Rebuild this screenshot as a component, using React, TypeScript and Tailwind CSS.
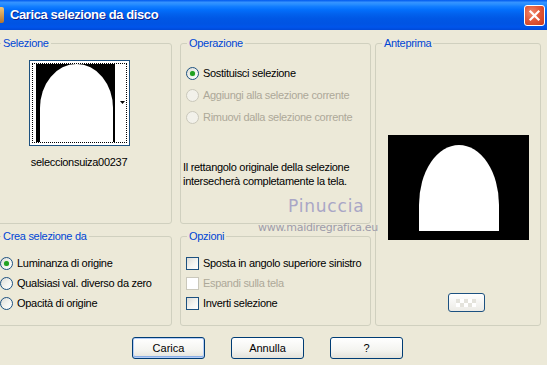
import React from "react";

const FONT = { fontFamily: '"Liberation Sans", Arial, sans-serif' };

function Radio({ checked, disabled }: { checked?: boolean; disabled?: boolean }) {
  return (
    <span
      className={
        disabled
          ? "inline-flex w-[13px] h-[13px] shrink-0 rounded-full border border-[#CAC8BB] bg-[#F2F1EA] items-center justify-center"
          : "inline-flex w-[13px] h-[13px] shrink-0 rounded-full border border-[#1C5180] bg-[linear-gradient(135deg,#DCDCD7_0%,#F4F4F0_55%,#FFFFFF_100%)] items-center justify-center"
      }
    >
      {checked && <span className="w-[5px] h-[5px] rounded-full bg-[#21A121] shadow-[0_0_1px_#6DD36D]" />}
    </span>
  );
}

function Check({ disabled }: { disabled?: boolean }) {
  return (
    <span
      className={
        disabled
          ? "inline-block w-[13px] h-[13px] shrink-0 border border-[#CAC8BB] bg-white"
          : "inline-block w-[13px] h-[13px] shrink-0 border border-[#1C5180] bg-[linear-gradient(135deg,#DCDCD7_0%,#F4F4F0_55%,#FFFFFF_100%)]"
      }
    />
  );
}

function Group({
  title,
  className,
  children,
}: {
  title: string;
  className?: string;
  children?: React.ReactNode;
}) {
  return (
    <fieldset className={"border border-[#D0D0BF] rounded-[3px] min-w-0 " + (className ?? "")}>
      <legend className="ml-[6px] px-[2px] text-[#0046D5] leading-[13px]">{title}</legend>
      {children}
    </fieldset>
  );
}

function XPButton({ label, def }: { label: string; def?: boolean }) {
  return (
    <button
      className={
        def
          ? "w-[73px] h-[22px] rounded-[3px] border border-[#003C74] bg-[linear-gradient(to_bottom,#FFFFFF_0%,#F4F4F0_60%,#E3E2DA_100%)] shadow-[inset_0_0_0_1px_#B4CDF7,inset_0_-1px_0_1px_#89ADE4] text-black text-[11px] leading-none"
          : "w-[73px] h-[22px] rounded-[3px] border border-[#003C74] bg-[linear-gradient(to_bottom,#FFFFFF_0%,#F4F4F0_60%,#E3E2DA_100%)] text-black text-[11px] leading-none"
      }
    >
      {label}
    </button>
  );
}

export default function App() {
  return (
    <div
      className="relative w-[547px] h-[365px] overflow-hidden bg-[#ECE9D8] flex flex-col text-[11px] tracking-[-0.3px] text-black whitespace-nowrap"
      style={FONT}
    >
      {/* Title bar */}
      <div className="h-[30px] shrink-0 flex items-center bg-[linear-gradient(to_bottom,#0058EE_0%,#3593FF_8%,#288EFF_14%,#127DFF_22%,#036FFC_32%,#0262EE_46%,#0057E5_62%,#0054E3_80%,#0055EB_90%,#0049D8_100%)]">
        <div className="w-[4px] h-[16px] bg-[linear-gradient(to_bottom,#F1C67A,#B5742E)] rounded-r-[2px]" />
        <span className="ml-[6px] text-white font-bold text-[13px] tracking-[-0.4px] [text-shadow:1px_1px_0_#0A1E8A]">
          Carica selezione da disco
        </span>
        <div className="ml-auto mr-[2px] w-[21px] h-[21px] rounded-[3px] border border-white bg-[radial-gradient(circle_at_35%_35%,#F08A6E_0%,#E25A3B_45%,#C93A1B_100%)] flex items-center justify-center">
          <svg width="13" height="13" viewBox="0 0 13 13">
            <path d="M2.5 2.5 L10.5 10.5 M10.5 2.5 L2.5 10.5" stroke="white" strokeWidth="2.2" strokeLinecap="square" />
          </svg>
        </div>
      </div>

      {/* Body */}
      <div className="flex-1 flex flex-col pt-[7px]">
        <div className="grid grid-cols-[182px_191px_166px] grid-rows-[187px_96px] gap-x-[4px] gap-y-[6px] ml-[-6px]">
          {/* Selezione */}
          <Group title="Selezione" className="mr-[4px] flex flex-col items-center">
            <div className="flex flex-col items-center pr-[8px]">
              <div className="mt-[10px] w-[101px] h-[86px] border border-[#1C5180] bg-white p-[2px]">
                <div className="h-full border border-dotted border-black flex pl-[3px]">
                  <div className="w-[79px] h-full bg-black">
                    <svg width="79" height="78" viewBox="0 0 79 78">
                      <path d="M4 78 L4 44 A36.5 44 0 0 1 77 44 L77 78 Z" fill="white" />
                    </svg>
                  </div>
                  <div className="flex-1 relative">
                    <svg className="absolute right-[1px] top-[37px]" width="5" height="3" viewBox="0 0 5 3">
                      <path d="M0 0 L5 0 L2.5 3 Z" fill="black" />
                    </svg>
                  </div>
                </div>
              </div>
              <div className="mt-[10px] leading-[13px]">seleccionsuiza00237</div>
            </div>
          </Group>

          {/* Operazione */}
          <Group title="Operazione">
            <div className="flex flex-col pl-[5px]">
              <div className="mt-[12px] h-[22px] flex items-center gap-[4px]">
                <Radio checked />
                <span>Sostituisci selezione</span>
              </div>
              <div className="h-[22px] flex items-center gap-[4px] text-[#ACA899]">
                <Radio disabled />
                <span>Aggiungi alla selezione corrente</span>
              </div>
              <div className="h-[22px] flex items-center gap-[4px] text-[#ACA899]">
                <Radio disabled />
                <span>Rimuovi dalla selezione corrente</span>
              </div>
              <div className="mt-[32px] leading-[14px] -ml-[3px]">
                Il rettangolo originale della selezione
                <br />
                intersecherà completamente la tela.
              </div>
            </div>
          </Group>

          {/* Anteprima */}
          <Group title="Anteprima" className="row-span-2">
            <div className="flex flex-col items-center">
              <div className="mt-[85px] w-[141px] h-[105px] bg-black">
                <svg width="141" height="105" viewBox="0 0 141 105">
                  <path d="M31 96 L31 70 A40 60 0 0 1 111 70 L111 96 Z" fill="white" />
                </svg>
              </div>
              <div className="mt-[53px] ml-[16px] w-[37px] h-[19px] rounded-[3px] border border-[#1C5180] bg-[linear-gradient(to_bottom,#FFFFFF,#ECEBE6)] flex items-center justify-center">
                <div className="w-[20px] h-[8px] bg-[repeating-conic-gradient(#FFFFFF_0%_25%,#E4E3DC_0%_50%)] bg-[length:8px_8px]" />
              </div>
            </div>
          </Group>

          {/* Crea selezione da */}
          <Group title="Crea selezione da" className="mr-[4px]">
            <div className="flex flex-col pl-[5px]">
              <div className="mt-[10px] h-[20px] flex items-center gap-[4px]">
                <Radio checked />
                <span>Luminanza di origine</span>
              </div>
              <div className="h-[20px] flex items-center gap-[4px]">
                <Radio />
                <span>Qualsiasi val. diverso da zero</span>
              </div>
              <div className="h-[20px] flex items-center gap-[4px]">
                <Radio />
                <span>Opacità di origine</span>
              </div>
            </div>
          </Group>

          {/* Opzioni */}
          <Group title="Opzioni">
            <div className="flex flex-col pl-[5px]">
              <div className="mt-[10px] h-[20px] flex items-center gap-[4px]">
                <Check />
                <span>Sposta in angolo superiore sinistro</span>
              </div>
              <div className="h-[20px] flex items-center gap-[4px] text-[#ACA899]">
                <Check disabled />
                <span>Espandi sulla tela</span>
              </div>
              <div className="h-[20px] flex items-center gap-[4px]">
                <Check />
                <span>Inverti selezione</span>
              </div>
            </div>
          </Group>
        </div>

        {/* Buttons */}
        <div className="mt-[11px] ml-[132px] flex gap-[26px] tracking-normal">
          <XPButton label="Carica" def />
          <XPButton label="Annulla" />
          <XPButton label="?" />
        </div>
      </div>

      {/* Watermark */}
      <div
        className="absolute left-[288px] top-[198px] text-[17px] tracking-[0.8px] text-[#A9A6C6] leading-none"
        style={{ fontFamily: '"DejaVu Sans", sans-serif' }}
      >
        Pinuccia
      </div>
      <div
        className="absolute left-[258px] top-[222px] text-[11px] tracking-[-0.3px] text-[#9E9CAA] leading-none"
        style={{ fontFamily: '"DejaVu Sans", sans-serif' }}
      >
        www.maidiregrafica.eu
      </div>
    </div>
  );
}
